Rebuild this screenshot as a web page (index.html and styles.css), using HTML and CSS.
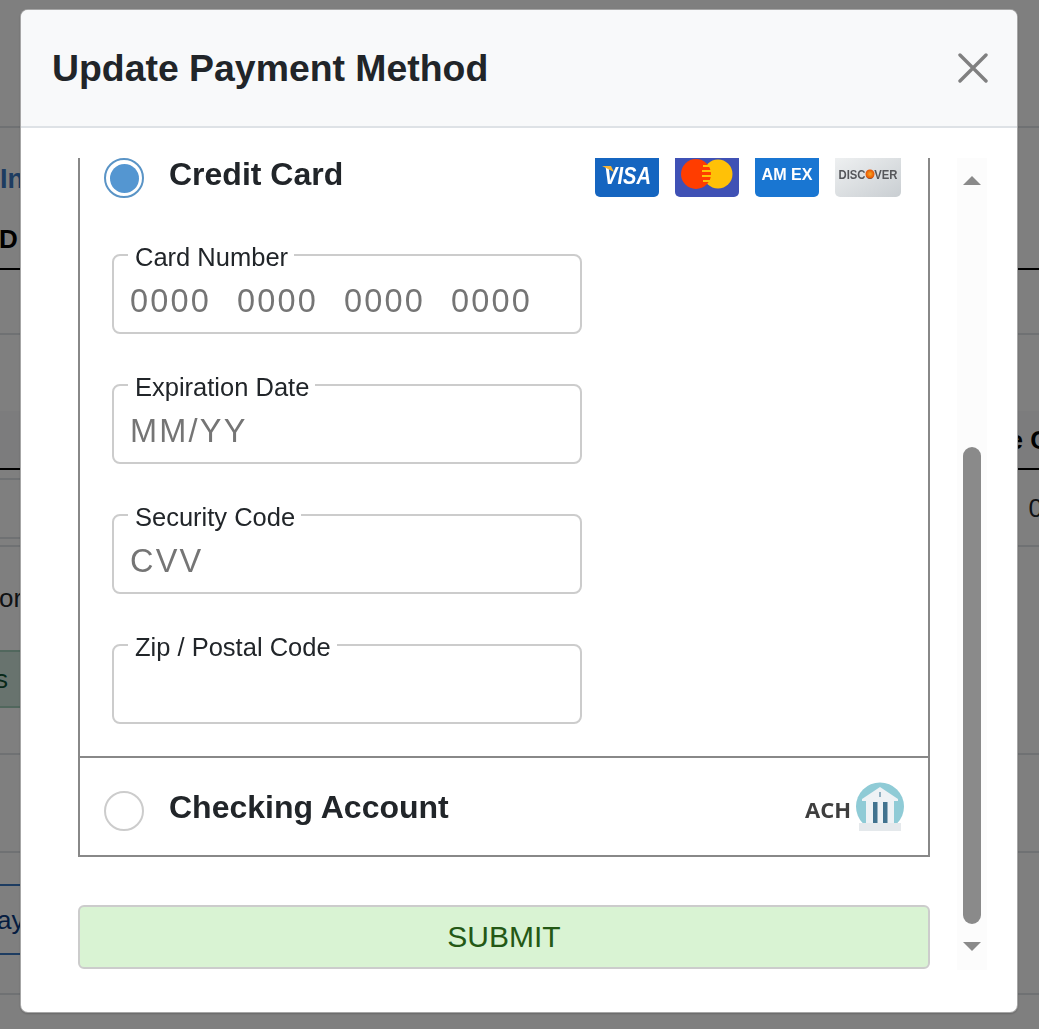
FILE: index.html
```html
<!DOCTYPE html>
<html lang="en">
<head>
<meta charset="utf-8">
<title>Update Payment Method</title>
<link rel="stylesheet" href="styles.css">
</head>
<body>
<div class="page">
  <div class="bg-row bg-top"></div>
  <div class="bg-row bg-head"><span class="bg-link">In</span><span class="bg-strong">D</span></div>
  <div class="bg-row bg-cell"></div>
  <div class="bg-gap"></div>
  <div class="bg-row bg-shade"><span class="bg-strong bg-right-c">e C</span></div>
  <div class="bg-row bg-value"><span class="bg-sub"></span><span class="bg-right-v">0</span></div>
  <div class="bg-row bg-info"><span class="bg-or">or</span><span class="bg-badge">s</span></div>
  <div class="bg-row bg-empty"></div>
  <div class="bg-row bg-pay-row"><span class="bg-pay">ay</span></div>
</div>
<div class="backdrop"></div>
<div class="modal">
  <header class="modal-header">
    <h1 class="modal-title">Update Payment Method</h1>
    <svg class="close-icon" viewBox="0 0 30 30" aria-label="Close"><path d="M2 2 28 28M28 2 2 28"/></svg>
  </header>
  <div class="modal-body">
    <div class="content">
      <div class="methods">
        <section class="method method-card">
          <div class="method-head method-head-card">
            <span class="radio radio-on"></span>
            <span class="method-name">Credit Card</span>
            <div class="cards">
              <svg class="card" viewBox="0 0 64 39"><path fill="#1565c0" d="M0 0H64V34a5 5 0 0 1-5 5H5a5 5 0 0 1-5-5Z"/><text class="visa-text" x="32.500" y="25.500" text-anchor="middle" textLength="47" lengthAdjust="spacingAndGlyphs">VISA</text><path fill="#f5b335" d="M7 8h9l3 6Z"/></svg>
              <svg class="card" viewBox="0 0 64 39"><path fill="#3f51b5" d="M0 0H64V34a5 5 0 0 1-5 5H5a5 5 0 0 1-5-5Z"/><circle cx="43" cy="16" r="14.500" fill="#ffc107"/><circle cx="21" cy="16" r="15" fill="#ff3d00"/><path fill="#ffc107" d="M28 7h9v2h-9ZM27 12h10v2H27ZM27 17h10v2H27ZM28 22h9v2h-9Z"/></svg>
              <svg class="card" viewBox="0 0 64 39"><path fill="#1976d2" d="M0 0H64V34a5 5 0 0 1-5 5H5a5 5 0 0 1-5-5Z"/><text class="amex-text" x="32" y="21.500" text-anchor="middle" textLength="51" lengthAdjust="spacingAndGlyphs">AM EX</text></svg>
              <svg class="card card-wide" viewBox="0 0 66 39"><defs><linearGradient id="disc" x1="0" y1="0" x2="1" y2="1"><stop offset="0" stop-color="#eef0f1"/><stop offset="1" stop-color="#c9ced2"/></linearGradient><radialGradient id="ball"><stop offset="0" stop-color="#f9a825"/><stop offset="1" stop-color="#e65100"/></radialGradient></defs><path fill="url(#disc)" d="M0 0H66V34a5 5 0 0 1-5 5H5a5 5 0 0 1-5-5Z"/><text class="disc-text" x="33" y="20.500" text-anchor="middle" textLength="59" lengthAdjust="spacingAndGlyphs">DISCOVER</text><circle cx="35" cy="16" r="4.500" fill="url(#ball)"/></svg>
            </div>
          </div>
          <div class="fields">
            <fieldset class="field"><legend>Card Number</legend><div class="value">0000 &nbsp;0000 &nbsp;0000 &nbsp;0000</div></fieldset>
            <fieldset class="field"><legend>Expiration Date</legend><div class="value">MM/YY</div></fieldset>
            <fieldset class="field"><legend>Security Code</legend><div class="value">CVV</div></fieldset>
            <fieldset class="field"><legend>Zip / Postal Code</legend><div class="value">&nbsp;</div></fieldset>
          </div>
        </section>
        <section class="method method-bank">
          <div class="method-head">
            <span class="radio radio-off"></span>
            <span class="method-name">Checking Account</span>
            <div class="ach">
              <span class="ach-text">ACH</span>
              <svg class="bank" viewBox="0 0 48 49"><circle cx="24" cy="24.500" r="24" fill="#8fcbd6"/><path fill="#eef2f5" d="M24 5 42 17v2H6v-2Z"/><rect x="10" y="19" width="28" height="22" fill="#eef2f5"/><rect x="17" y="20" width="4.500" height="21" fill="#41738f"/><rect x="27" y="20" width="4.500" height="21" fill="#41738f"/><rect x="3" y="41" width="42" height="8" fill="#e5e9ec"/><rect x="23.200" y="10" width="1.600" height="5" fill="#7aa0b6"/></svg>
            </div>
          </div>
        </section>
      </div>
      <button class="submit" type="button">SUBMIT</button>
    </div>
    <div class="scrollbar">
      <span class="arrow arrow-up"></span>
      <span class="thumb"></span>
      <span class="arrow arrow-down"></span>
    </div>
  </div>
</div>
</body>
</html>
```
FILE: styles.css
```css
* { box-sizing: border-box; }
html, body { margin: 0; height: 100%; overflow: hidden; }
body { font-family: "Liberation Sans", Arial, sans-serif; color: #212529; background: #fff; }

/* Page behind the dialog */
.page { height: 1029px; display: flex; flex-direction: column; }
.bg-row { position: relative; display: flex; flex: none; border-bottom: 2px solid #dee2e6; font-size: 26px; line-height: 30px; white-space: nowrap; }
.bg-top { height: 128px; }
.bg-head { height: 142px; flex-direction: column; align-items: flex-start; padding-top: 36px; border-bottom-color: #000; }
.bg-link { color: #3a79c2; font-weight: 700; font-size: 27px; }
.bg-strong { font-weight: 700; color: #000; }
.bg-head .bg-strong { margin-top: 30px; margin-left: -1px; }
.bg-cell { height: 65px; }
.bg-gap { flex: none; height: 76px; }
.bg-shade { height: 59px; align-items: center; background: #f8f9fa; border-bottom-color: #000; }
.bg-right-c { position: absolute; right: -10px; }
.bg-value { height: 77px; align-items: center; }
.bg-sub { align-self: flex-start; width: 60px; height: 61px; margin-top: 8px; border-top: 2px solid #dee2e6; border-bottom: 2px solid #dee2e6; }
.bg-right-v { position: absolute; right: -4px; color: #212529; }
.bg-info { height: 208px; flex-direction: column; align-items: flex-start; padding-top: 36px; }
.bg-or { margin-left: -1px; color: #212529; }
.bg-badge { display: flex; align-items: center; width: 70px; height: 58px; margin: 37px 0 0 -7px; background: #d1e7dd; border: 2px solid #a3cfbb; color: #0f5132; }
.bg-empty { height: 98px; }
.bg-pay-row { height: 142px; align-items: flex-start; }
.bg-pay { display: flex; align-items: center; width: 70px; height: 71px; margin: 31px 0 0 -3px; color: #0a3a82; border-top: 2px solid #3a79c2; border-bottom: 2px solid #3a79c2; }

.backdrop { position: fixed; inset: 0; background: rgba(0, 0, 0, .5); }

/* Dialog */
.modal { position: fixed; left: 20px; top: 9px; width: 998px; height: 1004px; background: #fff; border: 1px solid rgba(0,0,0,.35); border-radius: 8px; display: flex; flex-direction: column; overflow: hidden; box-shadow: 0 1px 2px rgba(0,0,0,.2); }
.modal-header { flex: none; height: 118px; background: #f8f9fa; border-bottom: 2px solid #dee2e6; padding: 0 29px 0 31px; display: flex; align-items: center; justify-content: space-between; }
.modal-title { margin: 0; font-size: 37.400px; line-height: 1.2; font-weight: 700; color: #212529; }
.close-icon { width: 30px; height: 30px; fill: none; stroke: #808080; stroke-width: 3.400; stroke-linecap: round; }
.modal-body { flex: 1; display: flex; padding: 30px 30px 42px 57px; min-height: 0; }
.content { flex: none; width: 852px; display: flex; flex-direction: column; }
.methods { flex: none; height: 699px; display: flex; flex-direction: column; border: 2px solid #888; border-top: 0; overflow: hidden; }
.method-card { flex: none; height: 600px; border-bottom: 2px solid #888; }
.method-bank { flex: 1; }
.method-head { display: flex; align-items: center; height: 97px; padding: 0 24px; }
.method-head-card { height: 39px; align-items: flex-start; padding-right: 27px; }
.radio { flex: none; width: 40px; height: 40px; border: 2px solid #ccc; border-radius: 50%; background: #fff; margin-right: 25px; }
.radio-off { margin-top: 8px; }
.radio-on { border-color: #5a94c6; padding: 3.500px; background: #5496d1; background-clip: content-box; }
.method-name { flex: 1; font-size: 32px; font-weight: 700; line-height: 36px; color: #212529; }
.method-head-card .method-name { margin-top: -2px; }
.cards { display: flex; gap: 16px; }
.card { display: block; width: 64px; height: 39px; }
.card-wide { width: 66px; }
.visa-text { font-family: "Liberation Sans", sans-serif; font-size: 24px; font-weight: 700; font-style: italic; fill: #fff; }
.amex-text { font-family: "Liberation Sans", sans-serif; font-size: 17px; font-weight: 700; fill: #fff; }
.disc-text { font-family: "Liberation Sans", sans-serif; font-size: 13px; font-weight: 700; fill: #55565a; }
.ach { display: flex; align-items: center; gap: 5px; }
.ach-text { font-family: "Open Sans", sans-serif; font-size: 22px; font-weight: 700; color: #3e3e3e; margin-top: 4px; }
.bank { display: block; width: 48px; height: 49px; }

.fields { display: flex; flex-direction: column; gap: 36px; padding: 43px 0 0 32px; }
.field { width: 470px; height: 94px; margin: 0; padding: 0 0 0 16px; border: 2px solid #ccc; border-radius: 8px; }
.field legend { margin: 0 0 0 -2px; padding: 4px 6px 0 7px; font-size: 25.500px; line-height: 26px; color: #212529; }
.value { font-size: 32.500px; letter-spacing: 2.200px; word-spacing: 1.700px; line-height: 38px; color: #757575; margin-top: 12px; white-space: nowrap; }

.submit { flex: none; height: 64px; margin-top: 48px; background: #d9f3d3; border: 2px solid #ccc; border-radius: 6px; font-family: inherit; font-size: 30px; color: #245815; padding: 0; }

.scrollbar { flex: none; width: 30px; margin-left: 27px; height: 812px; background: #fcfcfc; display: flex; flex-direction: column; align-items: center; }
.arrow { flex: none; width: 0; height: 0; border-left: 9px solid transparent; border-right: 9px solid transparent; }
.arrow-up { border-bottom: 9px solid #8a8a8a; margin-top: 18px; }
.thumb { flex: none; width: 18px; height: 477px; margin-top: 262px; background: #8a8a8a; border-radius: 9px; }
.arrow-down { border-top: 9px solid #8a8a8a; margin-top: 18px; }
```
